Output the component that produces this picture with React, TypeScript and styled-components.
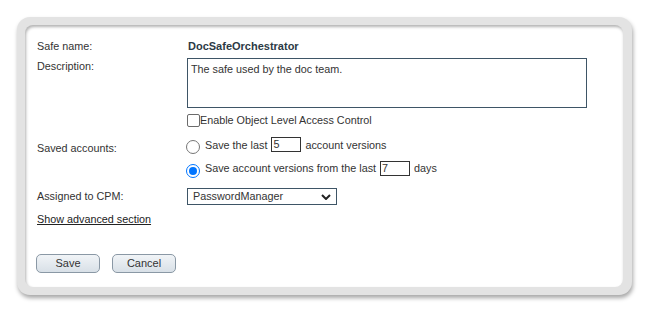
import React from "react";
import styled, { createGlobalStyle } from "styled-components";

const Global = createGlobalStyle`
  html, body { margin: 0; padding: 0; background: #ffffff; }
  body { font-family: "Liberation Sans", Arial, sans-serif; font-size: 10.8px; color: #333333; }
  * { box-sizing: border-box; }
`;

const Page = styled.div`
  width: 651px;
  height: 312px;
  padding: 17px 0 0 17px;
`;

const Frame = styled.div`
  width: 615px;
  height: 278px;
  padding: 8px 9px 8px 8px;
  background: #e3e3e3;
  border-radius: 13px;
  box-shadow: 1px 3px 4px rgba(0, 0, 0, 0.35);
`;

const Panel = styled.div`
  height: 100%;
  background: #ffffff;
  border-radius: 8px;
  box-shadow: inset 1px 2px 3px rgba(0, 0, 0, 0.3);
  padding: 13px 12px 0 12px;
  display: flex;
  flex-direction: column;
`;

const Row = styled.div<{ $mt?: number }>`
  display: grid;
  grid-template-columns: 150px 1fr;
  align-items: start;
  margin-top: ${(p) => p.$mt ?? 0}px;
`;

const Label = styled.div<{ $pt?: number }>`
  line-height: 16px;
  padding-top: ${(p) => p.$pt ?? 0}px;
  color: #333333;
`;

const Value = styled.div`
  line-height: 16px;
  font-weight: bold;
  font-size: 11px;
  color: #2c3a45;
  padding-left: 1px;
`;

const TextArea = styled.div`
  width: 400px;
  height: 50px;
  border: 1px solid #3e5566;
  padding: 3px 3px;
  line-height: 14px;
  color: #333333;
`;

const CheckLine = styled.label`
  display: flex;
  align-items: center;
  height: 14px;
  line-height: 14px;
`;

const Box = styled.span`
  width: 13px;
  height: 13px;
  border: 1px solid #6b6b6b;
  border-radius: 2px;
  background: #ffffff;
  margin-top: 1px;
`;

const Options = styled.div`
  display: flex;
  flex-direction: column;
  gap: 8px;
`;

const OptionLine = styled.label`
  display: flex;
  align-items: center;
  height: 16px;
  line-height: 16px;
`;

const Radio = styled.span<{ $on?: boolean }>`
  width: 14px;
  height: 14px;
  border-radius: 50%;
  margin-left: -1px;
  margin-right: 5px;
  margin-top: ${(p) => (p.$on ? 5 : 6)}px;
  border: 1px solid ${(p) => (p.$on ? "#0075ff" : "#767676")};
  background: #ffffff;
  display: flex;
  align-items: center;
  justify-content: center;
  &::after {
    content: "";
    display: ${(p) => (p.$on ? "block" : "none")};
    width: 8px;
    height: 8px;
    border-radius: 50%;
    background: #0075ff;
  }
`;

const OptionText = styled.span<{ $dy?: number }>`
  position: relative;
  top: ${(p) => p.$dy ?? 0}px;
`;

const SmallInput = styled.span`
  display: inline-block;
  width: 30px;
  height: 15px;
  border: 1px solid #333333;
  line-height: 13px;
  padding-left: 1px;
  margin: 0 4px 0 4px;
`;

const Select = styled.div`
  width: 150px;
  height: 17px;
  border: 1px solid #3e5566;
  display: flex;
  align-items: center;
  justify-content: space-between;
  padding: 0 5px 0 5px;
  line-height: 15px;
  color: #333333;
`;

const LinkText = styled.a`
  color: #222222;
  text-decoration: underline;
  line-height: 16px;
  margin-top: 6px;
  align-self: flex-start;
  cursor: pointer;
`;

const Buttons = styled.div`
  display: flex;
  gap: 12px;
  margin-top: 27px;
  margin-left: -1px;
`;

const Button = styled.button`
  width: 64px;
  height: 19px;
  border: 1px solid #8a98a5;
  border-radius: 5px;
  background: linear-gradient(#f1f4f7, #d8e0e7);
  font-family: "Liberation Sans", Arial, sans-serif;
  font-size: 11px;
  color: #333333;
  padding: 0;
  line-height: 17px;
`;

export default function App() {
  return (
    <>
      <Global />
      <Page>
        <Frame>
          <Panel>
            <Row>
              <Label>Safe name:</Label>
              <Value>DocSafeOrchestrator</Value>
            </Row>
            <Row $mt={4}>
              <Label>Description:</Label>
              <TextArea>The safe used by the doc team.</TextArea>
            </Row>
            <Row $mt={5}>
              <div />
              <CheckLine>
                <Box />
                <span>Enable Object Level Access Control</span>
              </CheckLine>
            </Row>
            <Row $mt={9}>
              <Label $pt={4}>Saved accounts:</Label>
              <Options>
                <OptionLine>
                  <Radio />
                  <OptionText $dy={1}>Save the last</OptionText>
                  <SmallInput>5</SmallInput>
                  <OptionText $dy={1}>account versions</OptionText>
                </OptionLine>
                <OptionLine>
                  <Radio $on />
                  <OptionText>Save account versions from the last</OptionText>
                  <SmallInput>7</SmallInput>
                  <OptionText>days</OptionText>
                </OptionLine>
              </Options>
            </Row>
            <Row $mt={12}>
              <Label>Assigned to CPM:</Label>
              <Select>
                <span>PasswordManager</span>
                <svg width="10" height="6" viewBox="0 0 10 6">
                  <path d="M1 1 L5 5 L9 1" fill="none" stroke="#222" strokeWidth="2" />
                </svg>
              </Select>
            </Row>
            <LinkText>Show advanced section</LinkText>
            <Buttons>
              <Button>Save</Button>
              <Button>Cancel</Button>
            </Buttons>
          </Panel>
        </Frame>
      </Page>
    </>
  );
}
